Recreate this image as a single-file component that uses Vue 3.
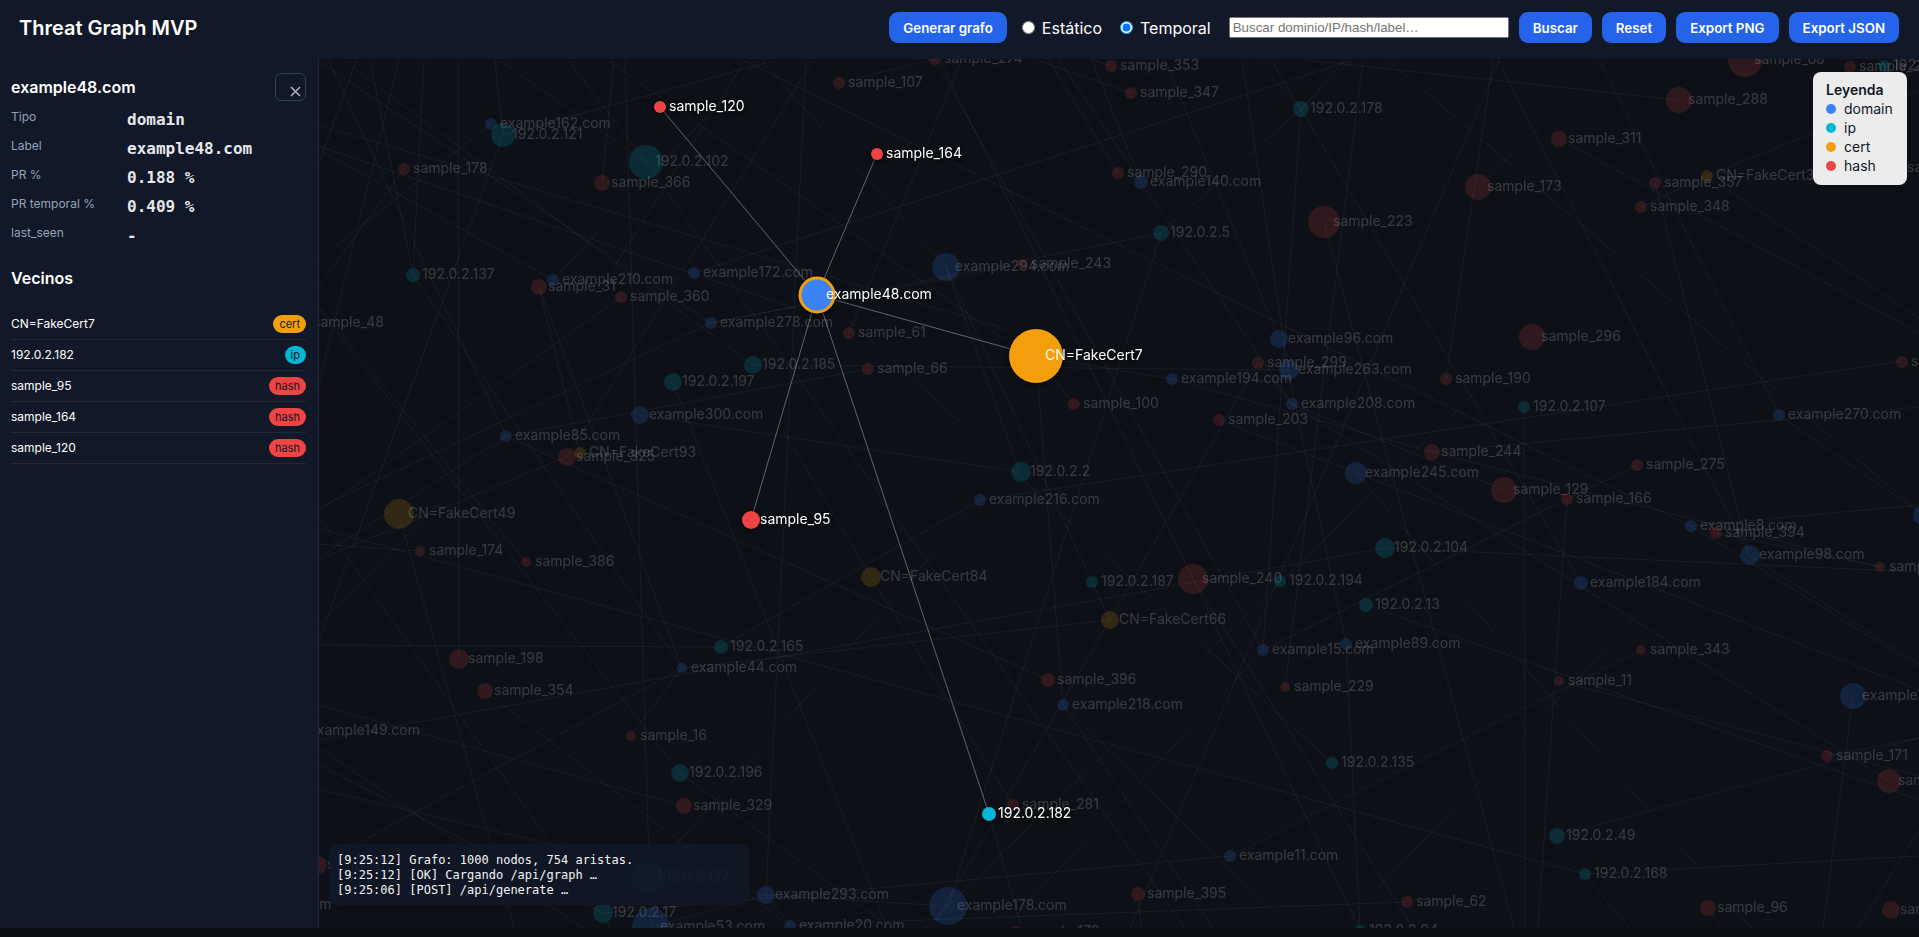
<script setup>
import { ref, computed } from 'vue'

const mode = ref('temporal')
const query = ref('')

const details = [
  ['Tipo', 'domain'],
  ['Label', 'example48.com'],
  ['PR %', '0.188 %'],
  ['PR temporal %', '0.409 %'],
  ['last_seen', '-'],
]

const neighbours = [
  { label: 'CN=FakeCert7', type: 'cert' },
  { label: '192.0.2.182', type: 'ip' },
  { label: 'sample_95', type: 'hash' },
  { label: 'sample_164', type: 'hash' },
  { label: 'sample_120', type: 'hash' },
]

const types = ['domain', 'ip', 'cert', 'hash']

const log = [
  '[9:25:12] Grafo: 1000 nodos, 754 aristas.',
  '[9:25:12] [OK] Cargando /api/graph …',
  '[9:25:06] [POST] /api/generate …',
]

const typeOf = (label) => {
  if (label.startsWith('example')) return 'domain'
  if (label.startsWith('CN=')) return 'cert'
  if (label.startsWith('sample')) return 'hash'
  return 'ip'
}

// World position of the canvas' top left corner
const pan = { x: 319, y: 59 }

// label, x, y, radius
const nodes = [
  ['example162.com', 491, 124, 6], ['192.0.2.121', 503, 135, 12], ['192.0.2.102', 646, 162, 17],
  ['sample_178', 404, 169, 6], ['sample_366', 602, 183, 8], ['192.0.2.137', 413, 275, 7],
  ['example210.com', 553, 280, 6], ['sample_31', 539, 287, 8], ['sample_360', 621, 297, 6],
  ['example172.com', 694, 273, 6], ['example278.com', 711, 323, 6], ['sample_48', 304, 323, 6],
  ['sample_107', 839, 83, 6], ['sample_61', 849, 333, 6], ['sample_274', 935, 59, 6],
  ['sample_353', 1111, 66, 6], ['sample_347', 1131, 93, 6], ['192.0.2.178', 1301, 109, 8],
  ['sample_290', 1118, 173, 6], ['example140.com', 1141, 182, 7], ['192.0.2.5', 1161, 233, 8],
  ['sample_223', 1324, 222, 16], ['example294.com', 946, 267, 14], ['sample_243', 1022, 264, 5],
  ['example96.com', 1279, 339, 9], ['sample_68', 1745, 60, 17], ['sample_288', 1679, 100, 13],
  ['sample_311', 1559, 139, 8], ['sample_173', 1478, 187, 13], ['sample_357', 1655, 183, 6],
  ['CN=FakeCert35', 1707, 176, 6], ['sample_348', 1641, 207, 6], ['sample_296', 1532, 337, 13],
  ['sample_241', 1850, 67, 6], ['192.0.2.43', 1884, 66, 6], ['sample_303', 1898, 168, 6],
  ['sample_315', 1902, 362, 6], ['192.0.2.185', 753, 365, 9], ['192.0.2.197', 673, 382, 9],
  ['example300.com', 640, 415, 9], ['example85.com', 506, 436, 6], ['sample_325', 567, 457, 9],
  ['CN=FakeCert93', 580, 453, 6], ['CN=FakeCert49', 399, 514, 15], ['sample_174', 420, 551, 5],
  ['sample_386', 526, 562, 5], ['192.0.2.165', 721, 647, 7], ['sample_198', 459, 659, 10],
  ['sample_66', 868, 369, 6], ['sample_100', 1074, 404, 6], ['example194.com', 1172, 379, 6],
  ['sample_299', 1258, 363, 6], ['example263.com', 1289, 370, 10], ['example208.com', 1292, 404, 6],
  ['sample_203', 1219, 420, 6], ['192.0.2.2', 1021, 472, 10], ['example216.com', 980, 500, 6],
  ['example245.com', 1356, 473, 11], ['CN=FakeCert84', 871, 577, 10], ['192.0.2.187', 1092, 582, 6],
  ['sample_240', 1193, 579, 15], ['192.0.2.194', 1280, 581, 6], ['192.0.2.104', 1385, 548, 10],
  ['192.0.2.13', 1366, 605, 7], ['CN=FakeCert66', 1110, 620, 9], ['example15.com', 1263, 650, 6],
  ['example89.com', 1346, 644, 6], ['sample_190', 1446, 379, 6], ['192.0.2.107', 1524, 407, 6],
  ['example270.com', 1779, 415, 6], ['sample_244', 1432, 452, 8], ['sample_275', 1637, 465, 6],
  ['sample_129', 1504, 490, 13], ['sample_166', 1567, 499, 6], ['example8.com', 1691, 526, 6],
  ['sample_394', 1716, 533, 6], ['example98.com', 1750, 555, 10], ['sample_391', 1880, 567, 5],
  ['example184.com', 1581, 583, 7], ['sample_343', 1641, 650, 5], ['example7.com', 1923, 515, 10],
  ['example44.com', 682, 668, 5], ['sample_354', 485, 691, 8], ['sample_16', 631, 736, 5],
  ['192.0.2.196', 680, 773, 9], ['sample_329', 684, 806, 8], ['example149.com', 300, 731, 6],
  ['sample_12', 318, 865, 9], ['192.0.2.127', 648, 877, 16], ['example117.com', 217, 905, 6],
  ['192.0.2.17', 603, 913, 10], ['example53.com', 651, 927, 19], ['example293.com', 766, 895, 9],
  ['example20.com', 790, 926, 6], ['sample_396', 1048, 680, 7], ['example218.com', 1063, 705, 6],
  ['sample_229', 1285, 687, 5], ['192.0.2.135', 1332, 763, 6], ['sample_281', 1013, 805, 6],
  ['example11.com', 1230, 856, 6], ['example178.com', 948, 906, 19], ['sample_395', 1138, 894, 7],
  ['sample_179', 1016, 932, 6], ['192.0.2.94', 1360, 931, 6], ['sample_11', 1559, 681, 5],
  ['example110.com', 1853, 696, 13], ['sample_171', 1827, 756, 6], ['sample_231', 1889, 781, 12],
  ['192.0.2.49', 1557, 836, 8], ['192.0.2.168', 1585, 874, 6], ['sample_62', 1407, 902, 6],
  ['sample_96', 1708, 908, 8], ['sample_210', 1891, 910, 9],
].map(([label, x, y, r]) => ({ label, x, y, r, type: typeOf(label) }))

const selected = { label: 'example48.com', x: 817, y: 295, r: 17, type: 'domain' }
const linked = [
  ['CN=FakeCert7', 1036, 356, 27], ['192.0.2.182', 989, 814, 7], ['sample_95', 751, 520, 9],
  ['sample_164', 877, 154, 6], ['sample_120', 660, 107, 6],
].map(([label, x, y, r]) => ({ label, x, y, r, type: typeOf(label) }))
const focus = [...linked, selected]

// x1, y1, x2, y2
const edges = [
  [344, 61, 753, 365], [318, 61, 711, 323], [356, 61, 320, 161], [370, 60, 413, 275],
  [424, 60, 413, 275], [413, 275, 682, 668], [328, 60, 506, 436], [458, 60, 459, 658],
  [399, 60, 318, 388], [495, 60, 503, 135], [503, 135, 319, 640], [404, 169, 318, 288],
  [491, 124, 318, 260], [318, 125, 1010, 330], [318, 146, 800, 310], [318, 149, 553, 280],
  [500, 61, 646, 162], [646, 162, 1185, 928], [773, 61, 503, 135], [569, 61, 646, 162],
  [614, 60, 602, 183], [625, 60, 651, 927], [609, 61, 1005, 340], [745, 61, 1691, 526],
  [762, 61, 946, 267], [813, 61, 567, 457], [759, 61, 553, 280], [745, 61, 612, 270],
  [806, 60, 766, 894], [694, 273, 1350, 61], [539, 287, 580, 453], [539, 287, 682, 668],
  [621, 297, 318, 512], [711, 323, 318, 508], [711, 323, 1022, 264], [711, 323, 1161, 233],
  [318, 305, 526, 562], [318, 308, 680, 773], [839, 83, 935, 59], [961, 61, 849, 333],
  [940, 60, 1193, 579], [935, 59, 1263, 650], [1092, 60, 1111, 66], [1039, 61, 1131, 93],
  [1049, 60, 1118, 173], [1059, 60, 1141, 182], [1092, 60, 1141, 182], [1141, 182, 1292, 404],
  [1165, 60, 1279, 339], [1242, 60, 1288, 370], [1257, 60, 1301, 109], [1271, 60, 1301, 109],
  [1301, 109, 1581, 583], [1345, 60, 1301, 109], [1352, 60, 1301, 109], [1301, 109, 1161, 233],
  [1301, 109, 1263, 650], [1363, 60, 1285, 687], [1306, 60, 1679, 100], [1161, 233, 948, 906],
  [1324, 222, 1514, 928], [1499, 61, 1130, 928], [946, 267, 1020, 472], [946, 267, 1092, 582],
  [849, 320, 1332, 763], [1388, 60, 1923, 515], [1493, 60, 1446, 379], [1498, 60, 1749, 555],
  [1599, 60, 1779, 415], [1608, 60, 1478, 187], [1559, 139, 1919, 333], [1641, 207, 1707, 176],
  [1707, 176, 1919, 90], [1707, 176, 1919, 318], [1655, 183, 1749, 555], [1532, 337, 948, 906],
  [1263, 650, 1004, 928], [506, 436, 318, 625], [506, 436, 318, 558], [567, 457, 318, 560],
  [506, 436, 868, 369], [506, 436, 1048, 680], [640, 415, 1020, 472], [673, 382, 886, 925],
  [753, 365, 1289, 370], [399, 514, 514, 928], [318, 528, 1585, 874], [318, 544, 420, 551],
  [318, 516, 611, 928], [318, 645, 721, 647], [721, 647, 980, 500], [980, 500, 648, 877],
  [980, 500, 1902, 361], [1385, 548, 318, 740], [1110, 620, 682, 668], [1036, 356, 1074, 404],
  [1036, 356, 1172, 379], [1172, 379, 1432, 452], [1432, 452, 1880, 567], [1036, 356, 1063, 705],
  [1258, 363, 1292, 404], [1292, 404, 1504, 490], [1219, 420, 1919, 690], [1258, 363, 932, 928],
  [1288, 370, 1346, 644], [1346, 644, 1360, 930], [1292, 404, 1889, 781], [1356, 473, 1751, 928],
  [1193, 579, 1360, 930], [1193, 579, 1413, 928], [1385, 548, 1919, 572], [1366, 605, 1919, 800],
  [1263, 650, 1567, 499], [1567, 499, 1637, 465], [1092, 582, 1110, 620], [871, 577, 1013, 805],
  [871, 577, 783, 430], [1524, 407, 1525, 928], [1567, 499, 1538, 928], [1716, 533, 1340, 928],
  [1432, 452, 1919, 407], [1779, 415, 1923, 515], [1691, 526, 1919, 505], [1716, 533, 1880, 567],
  [1749, 555, 1919, 664], [1691, 526, 1919, 667], [1559, 681, 1919, 776], [1641, 650, 1230, 856],
  [1557, 836, 1919, 738], [1827, 756, 1919, 738], [1853, 696, 1823, 928], [1585, 874, 1919, 856],
  [1585, 874, 1629, 928], [1919, 830, 1858, 928], [1407, 902, 790, 925], [1708, 908, 1722, 928],
  [1138, 894, 1141, 928], [485, 691, 790, 926], [318, 705, 684, 806], [682, 668, 318, 865],
  [682, 668, 631, 736], [680, 773, 880, 920], [318, 747, 583, 928], [318, 764, 603, 913],
  [318, 789, 766, 895], [766, 895, 790, 926], [766, 895, 948, 906], [766, 895, 651, 927],
  [1230, 856, 603, 913], [1063, 705, 1290, 928], [1063, 705, 1213, 928], [948, 906, 925, 928],
  [948, 906, 972, 928], [989, 814, 1022, 928],
]

const origin = computed(() => `translate(${-pan.x} ${-pan.y})`)
</script>

<template>
  <div class="app">
    <header class="topbar">
      <h1>Threat Graph MVP</h1>
      <form class="controls" @submit.prevent>
        <button type="button" class="btn">Generar grafo</button>
        <div class="modes">
          <label><input v-model="mode" type="radio" name="mode" value="estatico" />Estático</label>
          <label><input v-model="mode" type="radio" name="mode" value="temporal" />Temporal</label>
        </div>
        <input v-model="query" class="search" type="text" aria-label="Buscar" placeholder="Buscar dominio/IP/hash/label…" />
        <button type="submit" class="btn">Buscar</button>
        <button type="button" class="btn">Reset</button>
        <button type="button" class="btn">Export PNG</button>
        <button type="button" class="btn">Export JSON</button>
      </form>
    </header>

    <main class="main">
      <aside class="side">
        <div class="side-head">
          <h2>example48.com</h2>
          <button type="button" class="close" aria-label="Cerrar">
            <svg width="11" height="11" viewBox="0 0 11 11"><path d="M1 1L10 10M10 1L1 10" /></svg>
          </button>
        </div>
        <dl class="details">
          <template v-for="[key, value] in details" :key="key">
            <dt>{{ key }}</dt>
            <dd>{{ value }}</dd>
          </template>
        </dl>
        <h2>Vecinos</h2>
        <ul class="neighbours">
          <li v-for="n in neighbours" :key="n.label">
            <span>{{ n.label }}</span>
            <span class="pill" :class="n.type">{{ n.type }}</span>
          </li>
        </ul>
      </aside>

      <section class="canvas">
        <svg class="graph" width="100%" height="100%">
          <g :transform="origin">
            <g class="edges">
              <line v-for="(e, i) in edges" :key="i" :x1="e[0]" :y1="e[1]" :x2="e[2]" :y2="e[3]" />
            </g>
            <g class="edges active">
              <line v-for="n in linked" :key="n.label" :x1="selected.x" :y1="selected.y" :x2="n.x" :y2="n.y" />
            </g>
            <g v-for="n in nodes" :key="n.label" class="node faded">
              <circle :class="n.type" :cx="n.x" :cy="n.y" :r="n.r" />
              <text :x="n.x + 9" :y="n.y + 4">{{ n.label }}</text>
            </g>
            <g v-for="n in focus" :key="n.label" class="node" :class="{ selected: n === selected }">
              <circle :class="n.type" :cx="n.x" :cy="n.y" :r="n.r" />
              <text :x="n.x + 9" :y="n.y + 4">{{ n.label }}</text>
            </g>
          </g>
        </svg>

        <div class="legend">
          <strong>Leyenda</strong>
          <div v-for="t in types" :key="t" class="legend-row"><i :class="t"></i>{{ t }}</div>
        </div>

        <div class="log">
          <div v-for="line in log" :key="line">{{ line }}</div>
        </div>
      </section>
    </main>
  </div>
</template>

<style>
body {
  background: #0b0f14;
}
</style>

<style scoped>
.app {
  display: flex;
  flex-direction: column;
  height: 100vh;
  padding-bottom: 9px;
  box-sizing: border-box;
  color: #fff;
  font: 16px Inter, "Noto Sans", sans-serif;
}
.topbar {
  display: flex;
  align-items: flex-start;
  justify-content: space-between;
  padding: 12px 20px 14px 19px;
  background: #111827;
}
h1 {
  margin: 0;
  font-size: 20px;
  font-weight: 600;
  line-height: 33px;
}
.controls {
  display: flex;
  align-items: center;
  gap: 10px;
}
.btn {
  height: 31px;
  padding: 0 14px;
  border: 0;
  border-radius: 9px;
  background: #2563eb;
  color: #fff;
  font-family: inherit;
  font-weight: 600;
}
.modes {
  display: flex;
  gap: 5px;
}
.modes label {
  display: flex;
  align-items: center;
  margin-right: 8px;
}
.modes input {
  margin: 0 7px 0 5px;
}
.search {
  width: 280px;
  height: 21px;
  box-sizing: border-box;
  font-family: "Liberation Sans", sans-serif;
}
.main {
  display: flex;
  flex: 1;
  min-height: 0;
}
.side {
  width: 318px;
  flex: none;
  box-sizing: border-box;
  padding: 14px 12px 0 11px;
  background: #111827;
}
.side-head {
  display: flex;
  justify-content: space-between;
  align-items: flex-start;
}
h2 {
  margin: 0;
  font-size: 16px;
  font-weight: 600;
  line-height: 28px;
}
.close {
  display: flex;
  justify-content: flex-end;
  align-items: flex-end;
  width: 31px;
  height: 28px;
  padding: 0 4px 3px;
  box-sizing: border-box;
  border: 1px solid #334155;
  border-radius: 6px;
  background: none;
}
.close path {
  fill: none;
  stroke: #b0b5bd;
  stroke-width: 1.5;
}
.details {
  display: grid;
  grid-template-columns: 110px 1fr;
  gap: 8px 6px;
  margin: 8px 0 18px;
}
.details dt {
  color: #94a3b8;
  font-size: 12px;
  line-height: 16px;
}
.details dd {
  margin: 0;
  color: #e5e7eb;
  font: bold 16px/21px "DejaVu Sans Mono", monospace;
}
.neighbours {
  margin: 17px 0 0;
  padding: 0;
  list-style: none;
}
.neighbours li {
  display: flex;
  justify-content: space-between;
  padding: 6px 0;
  border-bottom: 1px solid #1f2937;
  font-size: 12px;
  line-height: 18px;
}
.pill {
  padding: 0 6px;
  border-radius: 9px;
  color: #111827;
  font-size: 11px;
}
.pill.cert { background: #f59e0b; }
.pill.ip { background: #06b6d4; }
.pill.hash { background: #ef4444; }
.canvas {
  position: relative;
  flex: 1;
  min-width: 0;
  overflow: hidden;
  border-left: 1px solid #1f2937;
  background: #0d1117;
}
.graph {
  position: absolute;
  inset: 0;
}
.edges line {
  stroke: #fff;
  stroke-opacity: 0.05;
}
.edges.active line {
  stroke: #a5a5b0;
  stroke-opacity: 0.55;
}
.node text {
  fill: #fff;
  font-size: 14px;
}
.node.faded circle {
  opacity: 0.16;
}
.node.faded text {
  opacity: 0.17;
}
.node:not(.faded) {
  filter: drop-shadow(0 1px 2px #000);
}
.node.selected circle {
  stroke: #f59e0b;
  stroke-width: 3px;
}
circle.domain { fill: #3b82f6; }
circle.ip { fill: #06b6d4; }
circle.cert { fill: #f59e0b; }
circle.hash { fill: #ef4444; }
.legend {
  position: absolute;
  top: 13px;
  right: 12px;
  min-width: 94px;
  padding: 8px 13px 10px;
  box-sizing: border-box;
  border-radius: 8px;
  background: rgba(255, 255, 255, 0.92);
  color: #111827;
  font-size: 14px;
  line-height: 19px;
}
.legend strong {
  font-weight: 600;
}
.legend-row {
  display: flex;
  align-items: center;
  gap: 8px;
}
.legend-row i {
  width: 10px;
  height: 10px;
  border-radius: 50%;
}
.legend-row .domain { background: #3b82f6; }
.legend-row .ip { background: #06b6d4; }
.legend-row .cert { background: #f59e0b; }
.legend-row .hash { background: #ef4444; }
.log {
  position: absolute;
  left: 10px;
  bottom: 23px;
  width: 420px;
  padding: 9px 8px 7px;
  box-sizing: border-box;
  border-radius: 8px;
  background: rgba(17, 24, 39, 0.85);
  color: #f3f4f6;
  font: 12px/15px "DejaVu Sans Mono", monospace;
}
</style>
